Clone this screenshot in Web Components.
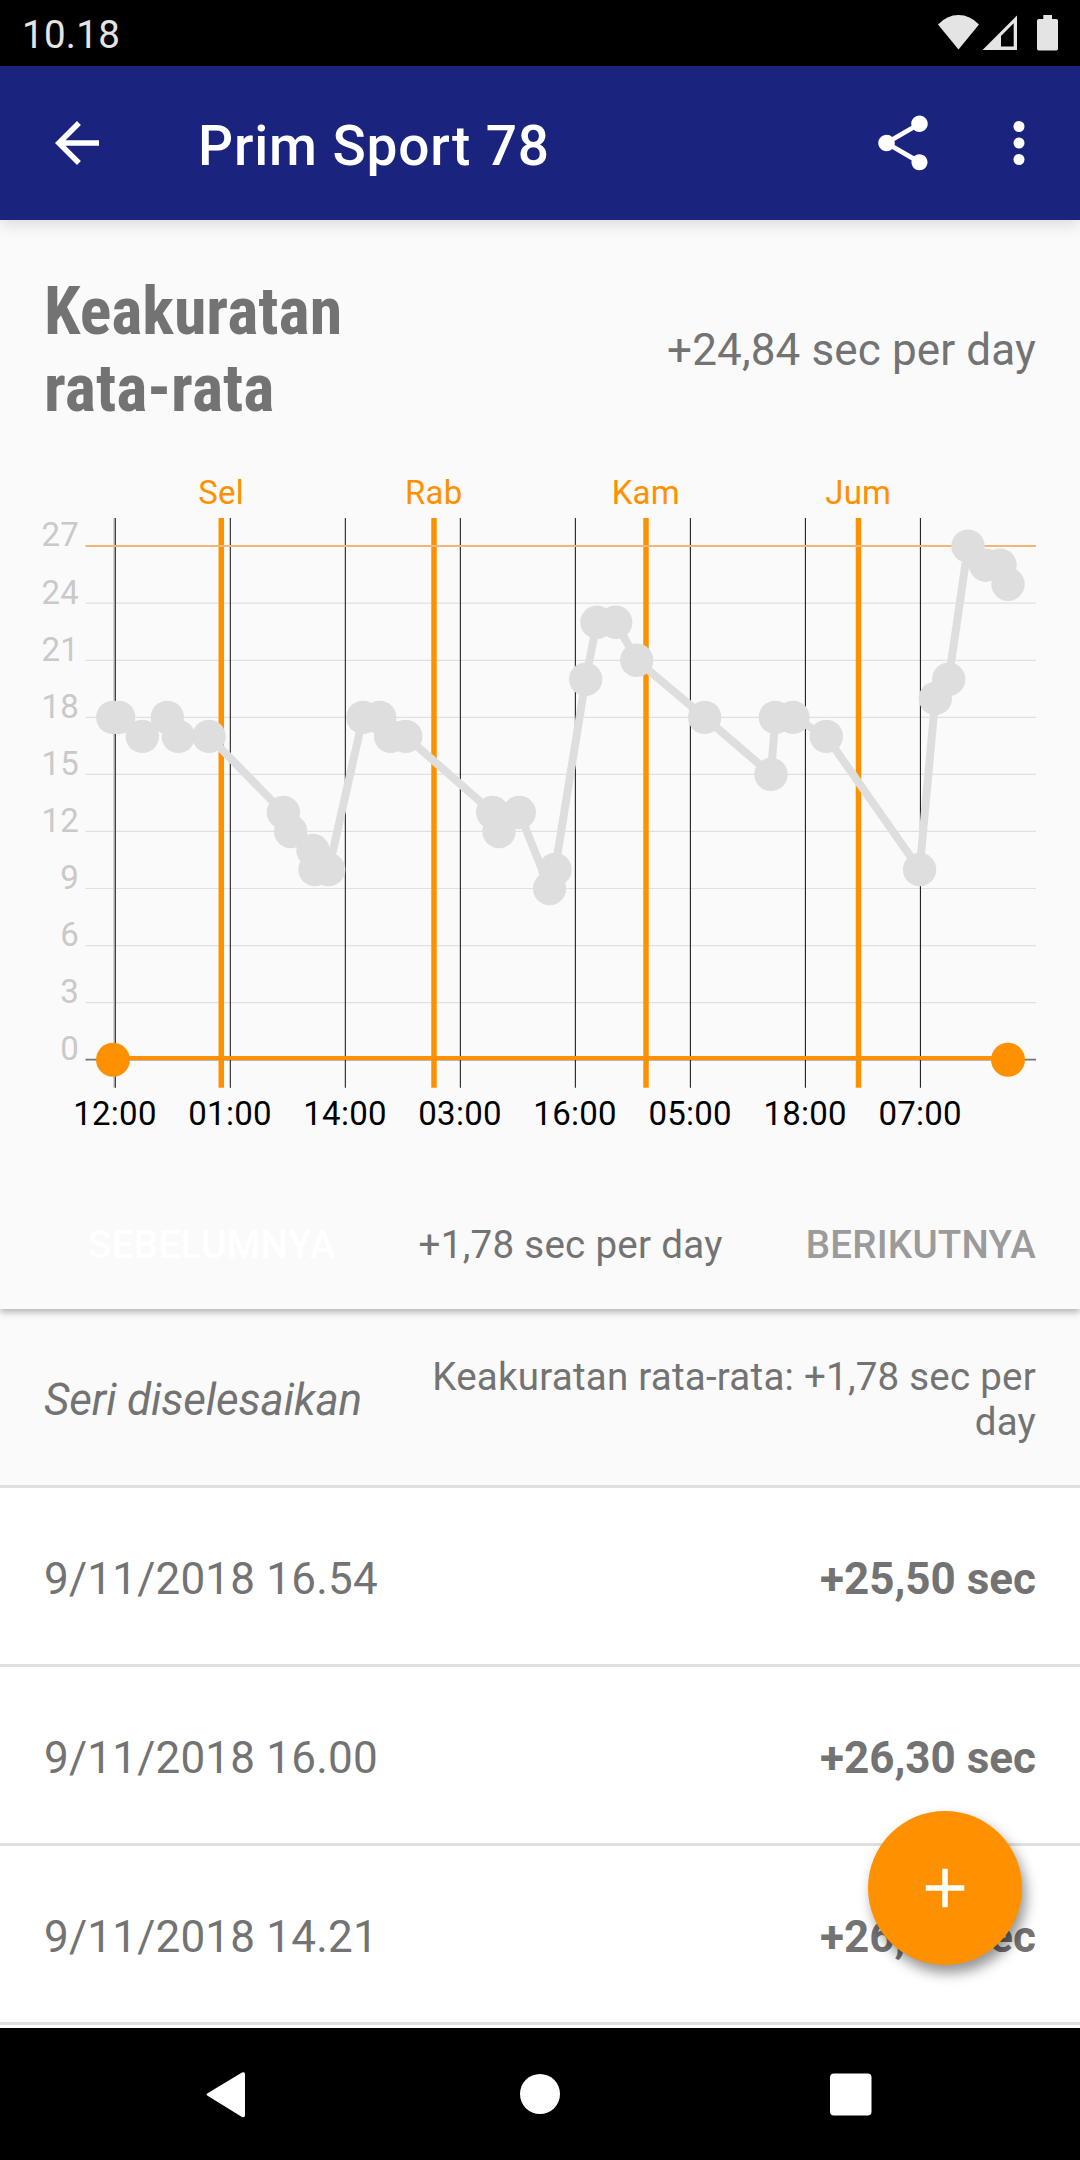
<!DOCTYPE html>
<html lang="id">
<head>
<meta charset="utf-8">
<title>Prim Sport 78</title>
<style>
  html, body {
    margin: 0;
    background: #fafafa;
  }
  body {
    width: 1080px;
    height: 2160px;
    overflow: hidden;
    font-family: Roboto, "Liberation Sans", sans-serif;
    color: #737373;
  }
</style>
</head>
<body>
<watch-screen>
  <status-bar slot="top" time="10.18"></status-bar>
  <app-bar slot="top">Prim Sport 78</app-bar>
  <accuracy-card>
    <span slot="title">Keakuratan rata-rata</span>
    <span slot="total">+24,84 sec per day</span>
    <deviation-chart></deviation-chart>
    <span slot="prev">SEBELUMNYA</span>
    <span slot="current">+1,78 sec per day</span>
    <span slot="next">BERIKUTNYA</span>
  </accuracy-card>
  <series-header>
    <span slot="label">Seri diselesaikan</span>
    Keakuratan rata-rata: +1,78 sec per day
  </series-header>
  <log-row date="9/11/2018 16.54">+25,50 sec</log-row>
  <log-row date="9/11/2018 16.00">+26,30 sec</log-row>
  <log-row date="9/11/2018 14.21">+26,40 sec</log-row>
  <add-button slot="fab"></add-button>
  <nav-bar slot="bottom"></nav-bar>
</watch-screen>

<script>
(function () {
  function define(name, html, setup) {
    const template = document.createElement('template');
    template.innerHTML = html;

    customElements.define(name, class extends HTMLElement {
      constructor() {
        super();
        this.attachShadow({ mode: 'open' });
        this.shadowRoot.appendChild(template.content.cloneNode(true));
      }

      connectedCallback() {
        if (setup) setup(this, this.shadowRoot);
      }
    });
  }

  define('watch-screen', `
    <style>
      :host {
        position: relative;
        display: flex;
        flex-direction: column;
        width: 1080px;
        height: 2160px;
        overflow: hidden;
      }
      .top {
        position: relative;
        z-index: 2;
      }
      .content {
        flex: 1;
        min-height: 0;
        overflow: hidden;
        background: #fff;
      }
      ::slotted(add-button) {
        position: absolute;
        right: 58px;
        bottom: 195px;
      }
    </style>
    <div class="top"><slot name="top"></slot></div>
    <div class="content"><slot></slot></div>
    <slot name="bottom"></slot>
    <slot name="fab"></slot>
  `);

  define('status-bar', `
    <style>
      :host {
        display: flex;
        justify-content: space-between;
        height: 66px;
        background: #000;
        color: #e4e4e4;
      }
      .time {
        padding: 12px 0 0 22px;
        font-size: 38.5px;
        letter-spacing: 0.3px;
        line-height: 45px;
      }
      svg { display: block; }
    </style>
    <span class="time"></span>
    <svg width="150" height="66" viewBox="930 0 150 66" fill="#e4e4e4">
      <path d="M958.5 49.5 938 24.5Q947 15 958.5 15T979 24.5Z"/>
      <path fill-rule="evenodd" d="M982.5 50 1017 15.5V50ZM1001 36V46.5H1013.7V23.3Z"/>
      <path d="M1043.3 15h8.700v4h4.200q1.800 0 1.800 1.800v28q0 1.800-1.800 1.800h-17.400q-1.800 0-1.800-1.800v-28q0-1.800 1.800-1.800h4.500z"/>
    </svg>
  `, function (host, root) {
    root.querySelector('.time').textContent = host.getAttribute('time') || '';
  });

  define('app-bar', `
    <style>
      :host {
        display: flex;
        align-items: center;
        height: 154px;
        padding: 0 28px 0 44px;
        background: #1a237e;
        color: #fff;
        box-shadow: 0 5px 14px rgba(0, 0, 0, 0.12);
        box-sizing: border-box;
      }
      svg {
        width: 66px;
        height: 66px;
        fill: currentColor;
      }
      .title {
        flex: 1;
        padding: 5px 0 0 88px;
        font-size: 55px;
        font-weight: 500;
        letter-spacing: 0.85px;
        line-height: 64px;
      }
      .more { margin-left: 50px; }
    </style>
    <svg viewBox="0 0 24 24"><path d="M20 11H7.830l5.590-5.590L12 4l-8 8 8 8 1.410-1.410L7.830 13H20v-2z"/></svg>
    <div class="title"><slot></slot></div>
    <svg viewBox="0 0 24 24"><path d="M18 16.080c-.76 0-1.440.3-1.960.77L8.910 12.700c.05-.23.09-.46.09-.7s-.04-.47-.09-.7l7.050-4.110c.54.5 1.250.81 2.040.81 1.660 0 3-1.340 3-3s-1.340-3-3-3-3 1.340-3 3c0 .24.04.47.09.7L8.040 9.810C7.500 9.310 6.790 9 6 9c-1.660 0-3 1.340-3 3s1.340 3 3 3c.79 0 1.500-.31 2.040-.81l7.120 4.160c-.05.21-.08.43-.08.65 0 1.610 1.310 2.920 2.920 2.920s2.920-1.310 2.920-2.920-1.310-2.920-2.920-2.920z"/></svg>
    <svg class="more" viewBox="0 0 24 24"><circle cx="12" cy="6" r="2"/><circle cx="12" cy="12" r="2"/><circle cx="12" cy="18" r="2"/></svg>
  `);

  define('accuracy-card', `
    <style>
      :host {
        position: relative;
        z-index: 1;
        display: flex;
        flex-direction: column;
        height: 1089px;
        background: #fafafa;
        box-shadow: 0 3px 7px rgba(0, 0, 0, 0.3);
      }
      .head {
        display: flex;
        align-items: center;
        justify-content: space-between;
        height: 154px;
        padding: 53px 44px 13px;
        font-size: 44px;
      }
      .title {
        width: 320px;
        font-family: "Roboto Condensed", Roboto, sans-serif;
        font-size: 66px;
        font-stretch: 75%;
        font-weight: 700;
        line-height: 77px;
      }
      .total { letter-spacing: 0.13px; }
      .pager {
        display: flex;
        justify-content: space-between;
        padding: 62px 44px 0 88px;
        font-size: 38.5px;
        letter-spacing: 0.3px;
        line-height: 45px;
      }
      .prev, .next { font-weight: 500; }
      .prev { color: #fff; letter-spacing: 0.4px; }
      .next { color: #9b9b9b; letter-spacing: 0.25px; }
    </style>
    <div class="head">
      <div class="title"><slot name="title"></slot></div>
      <div class="total"><slot name="total"></slot></div>
    </div>
    <slot></slot>
    <div class="pager">
      <div class="prev"><slot name="prev"></slot></div>
      <div><slot name="current"></slot></div>
      <div class="next"><slot name="next"></slot></div>
    </div>
  `);

  // [x, seconds] for every logged deviation
  const POINTS = [
    [112.8, 18], [118.7, 18], [142.3, 17], [167.3, 18], [178.3, 17], [209, 17],
    [283.4, 13], [290.7, 12], [313, 11], [315, 10], [328.7, 10],
    [363, 18], [379.7, 18], [390.7, 17], [405.7, 17],
    [492.7, 13], [499, 12], [519.3, 13], [549.6, 9], [555, 10],
    [585.7, 20], [597, 23], [615.7, 23], [636.7, 21], [704.7, 18],
    [771, 15], [775.3, 18], [793, 18], [826.3, 17], [919.6, 10],
    [935.3, 19], [948.7, 20], [968, 27], [985.7, 26], [1000, 26], [1008, 25]
  ];
  const HOURS = ['12:00', '01:00', '14:00', '03:00', '16:00', '05:00', '18:00', '07:00'];
  const DAYS = [['Sel', 221.3], ['Rab', 434], ['Kam', 646], ['Jum', 858.5]];

  function yOf(value) {
    return 619.7 - 19.02 * value;
  }

  define('deviation-chart', `
    <style>
      :host { display: block; height: 720px; }
      svg { display: block; }
      text { font-size: 33px; }
      .value { fill: #c9c9c9; text-anchor: end; }
      .hour { fill: #000; text-anchor: middle; letter-spacing: 0.25px; }
      .day { fill: #ff9100; text-anchor: middle; letter-spacing: 0.2px; }
      .grid { stroke: #e0e0e0; stroke-width: 1.2; }
      .max { stroke: #f0b777; stroke-width: 2; }
      .zero { stroke: #757575; stroke-width: 1.8; }
      .tick { stroke: #222; stroke-width: 1.1; }
      .midnight { stroke: #ff9100; stroke-width: 5.5; }
      .series { fill: none; stroke: #dedede; stroke-width: 8; stroke-linejoin: round; }
      .point { fill: #dedede; }
      .base { fill: #ff9100; }
    </style>
    <svg width="1080" height="720" viewBox="0 0 1080 720"></svg>
  `, function (host, root) {
    let out = '';
    for (let v = 0; v <= 27; v += 3) {
      const y = yOf(v);
      const cls = v === 0 ? 'zero' : 'grid';
      if (v < 27) out += `<line class="${cls}" x1="85.5" x2="1036" y1="${y}" y2="${y}"/>`;
      out += `<text class="value" x="78.700" y="${y + 0.3}">${v}</text>`;
    }
    out += '<line x1="114" x2="114" y1="78" y2="647.700" stroke="#c8c8c8" stroke-width="1.500"/>';
    HOURS.forEach((label, i) => {
      const x = 115.3 + i * 115.02;
      out += `<line class="tick" x1="${x}" x2="${x}" y1="78" y2="647.700"/>`;
      out += `<text class="hour" x="${x - 0.3}" y="684.700">${label}</text>`;
    });
    DAYS.forEach(([label, x]) => {
      out += `<line class="midnight" x1="${x}" x2="${x}" y1="78" y2="647.700"/>`;
      out += `<text class="day" x="${x - 0.2}" y="63.700">${label}</text>`;
    });
    out += '<line class="max" x1="85.5" x2="1036" y1="106" y2="106"/>';
    out += `<polyline class="series" points="${POINTS.map(([x, v]) => x + ',' + yOf(v)).join(' ')}"/>`;
    POINTS.forEach(([x, v]) => {
      out += `<circle class="point" cx="${x}" cy="${yOf(v)}" r="16.700"/>`;
    });
    out += '<rect class="base" x="113" y="616" width="895" height="4"/>';
    out += '<circle class="base" cx="113" cy="619.700" r="17"/><circle class="base" cx="1008" cy="619.700" r="17"/>';
    root.querySelector('svg').innerHTML = out;
  });

  define('series-header', `
    <style>
      :host {
        display: flex;
        align-items: center;
        justify-content: space-between;
        height: 179px;
        padding: 4px 44px 0;
        border-bottom: 3px solid #e0e0e0;
        background: #fafafa;
        box-sizing: border-box;
      }
      .label {
        font-size: 44px;
        font-style: italic;
        letter-spacing: -0.1px;
        padding-top: 1px;
      }
      .average {
        width: 612px;
        font-size: 38.5px;
        letter-spacing: 0.24px;
        line-height: 45.500px;
        text-align: right;
      }
    </style>
    <div class="label"><slot name="label"></slot></div>
    <div class="average"><slot></slot></div>
  `);

  define('log-row', `
    <style>
      :host {
        display: flex;
        align-items: center;
        justify-content: space-between;
        height: 179px;
        padding: 5px 44px 0;
        border-bottom: 3px solid #e0e0e0;
        background: #fff;
        font-size: 44px;
        box-sizing: border-box;
      }
      .date { letter-spacing: 0.2px; }
      .value { font-weight: 700; }
    </style>
    <span class="date"></span>
    <span class="value"><slot></slot></span>
  `, function (host, root) {
    root.querySelector('.date').textContent = host.getAttribute('date') || '';
  });

  define('add-button', `
    <style>
      :host {
        display: flex;
        align-items: center;
        justify-content: center;
        width: 154px;
        height: 154px;
        border-radius: 50%;
        background: #ff9100;
        box-shadow: 4px 8px 13px rgba(0, 0, 0, 0.42);
      }
      svg { width: 66px; height: 66px; fill: #fff; }
    </style>
    <svg viewBox="0 0 24 24"><path d="M19 13h-6v6h-2v-6H5v-2h6V5h2v6h6v2z"/></svg>
  `);

  define('nav-bar', `
    <style>
      :host {
        display: block;
        height: 132px;
        background: #000;
      }
      svg { display: block; fill: #fff; }
    </style>
    <svg width="1080" height="132" viewBox="0 0 1080 132">
      <path d="M208 68 242 89Q245 90 245 87V46Q245 43.500 242 44.500L208 65Q205 66.500 208 68Z"/>
      <circle cx="540" cy="66" r="20"/>
      <rect x="830" y="45.500" width="41.500" height="42" rx="4"/>
    </svg>
  `);
})();
</script>
</body>
</html>
